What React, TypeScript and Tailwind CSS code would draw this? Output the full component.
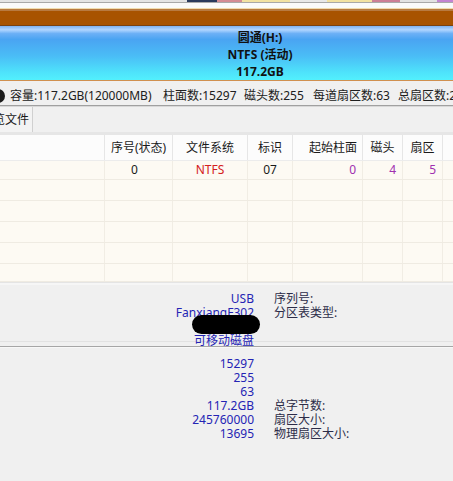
import React from "react";

const cols = [105, 68, 75, 45, 70, 40, 40, 20];

function HeaderCell({ w, children, align = "center", last = false }: { w: number; children?: React.ReactNode; align?: string; last?: boolean }) {
  const a = align === "right" ? "justify-end pr-[5px]" : "justify-center";
  return (
    <div
      className={`flex items-center ${a} shrink-0 border-r border-[#e6e6e6] ${last ? "border-r-0" : ""}`}
      style={{ width: w }}
    >
      {children}
    </div>
  );
}

function DataRow({ h, children }: { h: number; children?: React.ReactNode[] }) {
  return (
    <div className="flex border-b border-[#efebe2]" style={{ height: h }}>
      {cols.map((w, i) => (
        <div
          key={i}
          className="flex items-center shrink-0 border-r border-[#f1ede4]"
          style={{ width: w }}
        >
          {children ? children[i] : null}
        </div>
      ))}
    </div>
  );
}

export default function App() {
  return (
    <div className="w-[453px] h-[481px] overflow-hidden bg-[#f0f0f0] font-['Noto_Sans','Noto_Sans_CJK_SC',sans-serif] text-[12px] text-[#1a1a1a]">
      {/* top strip */}
      <div className="h-[9px] bg-[#f6f6f6] flex flex-col">
        <div className="flex h-[2px]">
          <div className="w-[187px] bg-[#e4e4e4]" />
          <div className="w-[30px] bg-[#2a3a5c]" />
          <div className="w-[25px] bg-[#d48c94]" />
          <div className="w-[48px] bg-[#f2e2a2]" />
          <div className="w-[37px] bg-[#e8e8e8]" />
          <div className="w-[45px] bg-[#f2e2a2]" />
          <div className="w-[28px] bg-[#cc7f96]" />
          <div className="w-[37px] bg-[#e2e2e2]" />
          <div className="flex-1 bg-[#c384d2]" />
        </div>
        <div className="h-px bg-[#a8a8a8]" />
        <div className="flex-1 bg-[#fafafa]" />
        <div className="h-px bg-[#efdcb0]" />
      </div>
      {/* brown bar */}
      <div className="h-[17px] bg-[#a85300] border-t-2 border-t-[#b87a40] border-b border-b-[#7a4210]" />
      {/* blue bar */}
      <div className="h-[54px] bg-[linear-gradient(to_bottom,#7eb2f0_0%,#b2d6ff_7%,#6cb0f6_14%,#4aa4f2_25%,#4abcf6_55%,#4ee2fb_85%,#52f0fd_100%)] flex flex-col items-center pl-[67px] pt-[3px] font-bold text-[12px] leading-[17px] text-[#111]">
        <div>圆通(H:)</div>
        <div>NTFS (活动)</div>
        <div>117.2GB</div>
      </div>
      <div className="h-px bg-[#d09050]" />
      <div className="h-[5px]" />
      {/* info row */}
      <div className="h-[19px] flex items-center whitespace-nowrap overflow-hidden text-[12px] text-[#202020]">
        <div className="w-[14px] h-[14px] rounded-full bg-[#1c1c1c] -ml-[9px] shrink-0" />
        <span className="ml-[5px] w-[153px] shrink-0">容量:117.2GB(120000MB)</span>
        <span className="w-[81px] shrink-0">柱面数:15297</span>
        <span className="w-[69px] shrink-0">磁头数:255</span>
        <span className="w-[85px] shrink-0">每道扇区数:63</span>
        <span className="shrink-0">总扇区数:245760000</span>
      </div>
      <div className="h-px bg-[#a0a0a0]" />
      <div className="h-px bg-[#d8d8d8]" />
      {/* tab row */}
      <div className="h-[25px] flex">
        <div className="w-[33px] border-r border-[#d0d0d0] flex items-center justify-end pr-[3px] bg-[#f3f3f3] overflow-hidden whitespace-nowrap">
          览文件
        </div>
      </div>
      <div className="h-[3px] bg-[#e6e6e6]" />
      {/* table */}
      <div className="h-[147px] bg-[#fdfaf3] overflow-hidden">
        <div className="h-[26px] flex bg-[#fcfcfc] border-b border-[#ececec] text-[#1a1a1a]">
          <HeaderCell w={105} />
          <HeaderCell w={68}>序号(状态)</HeaderCell>
          <HeaderCell w={75}>文件系统</HeaderCell>
          <HeaderCell w={45}>标识</HeaderCell>
          <HeaderCell w={70} align="right">起始柱面</HeaderCell>
          <HeaderCell w={40}>磁头</HeaderCell>
          <HeaderCell w={40}>扇区</HeaderCell>
          <HeaderCell w={20} last />
        </div>
        <DataRow h={19}>
          {[
            null,
            <div key="a" className="w-full text-center pr-[8px]">0</div>,
            <div key="b" className="w-full text-center text-[#d42020]">NTFS</div>,
            <div key="c" className="w-full text-center">07</div>,
            <div key="d" className="w-full text-right pr-[6px] text-[#a030b0]">0</div>,
            <div key="e" className="w-full text-right pr-[6px] text-[#a030b0]">4</div>,
            <div key="f" className="w-full text-right pr-[6px] text-[#a030b0]">5</div>,
            null,
          ]}
        </DataRow>
        <DataRow h={21} />
        <DataRow h={21} />
        <DataRow h={21} />
        <DataRow h={21} />
        <DataRow h={18} />
      </div>
      <div className="h-px bg-[#e4e4e4]" />
      <div className="h-[2px] bg-[#f6f6f6]" />
      {/* details 1 */}
      <div className="h-[56px] flex pt-[7px] leading-[14px]">
        <div className="w-[254px] shrink-0 text-right text-[#2424b4]">
          <div>USB</div>
          <div>FanxiangF302</div>
          <div className="relative h-[14px]">
            <div className="absolute right-[-6px] top-[-5px] w-[68px] h-[19px] rounded-full bg-black" />
          </div>
          <div>可移动磁盘</div>
        </div>
        <div className="ml-[20px] text-[#2c2c48]">
          <div>序列号:</div>
          <div>分区表类型:</div>
        </div>
      </div>
      <div className="h-px bg-[#e2e2e2]" />
      <div className="h-[4px]" />
      <div className="h-px bg-[#a6a6a6]" />
      <div className="h-px bg-[#f8f8f8]" />
      {/* details 2 */}
      <div className="flex pt-[9px] leading-[14px]">
        <div className="w-[254px] shrink-0 text-right text-[#2424b4]">
          <div>15297</div>
          <div>255</div>
          <div>63</div>
          <div>117.2GB</div>
          <div>245760000</div>
          <div>13695</div>
        </div>
        <div className="ml-[20px] text-[#2c2c48]">
          <div className="h-[14px]" />
          <div className="h-[14px]" />
          <div className="h-[14px]" />
          <div>总字节数:</div>
          <div>扇区大小:</div>
          <div>物理扇区大小:</div>
        </div>
      </div>
    </div>
  );
}
